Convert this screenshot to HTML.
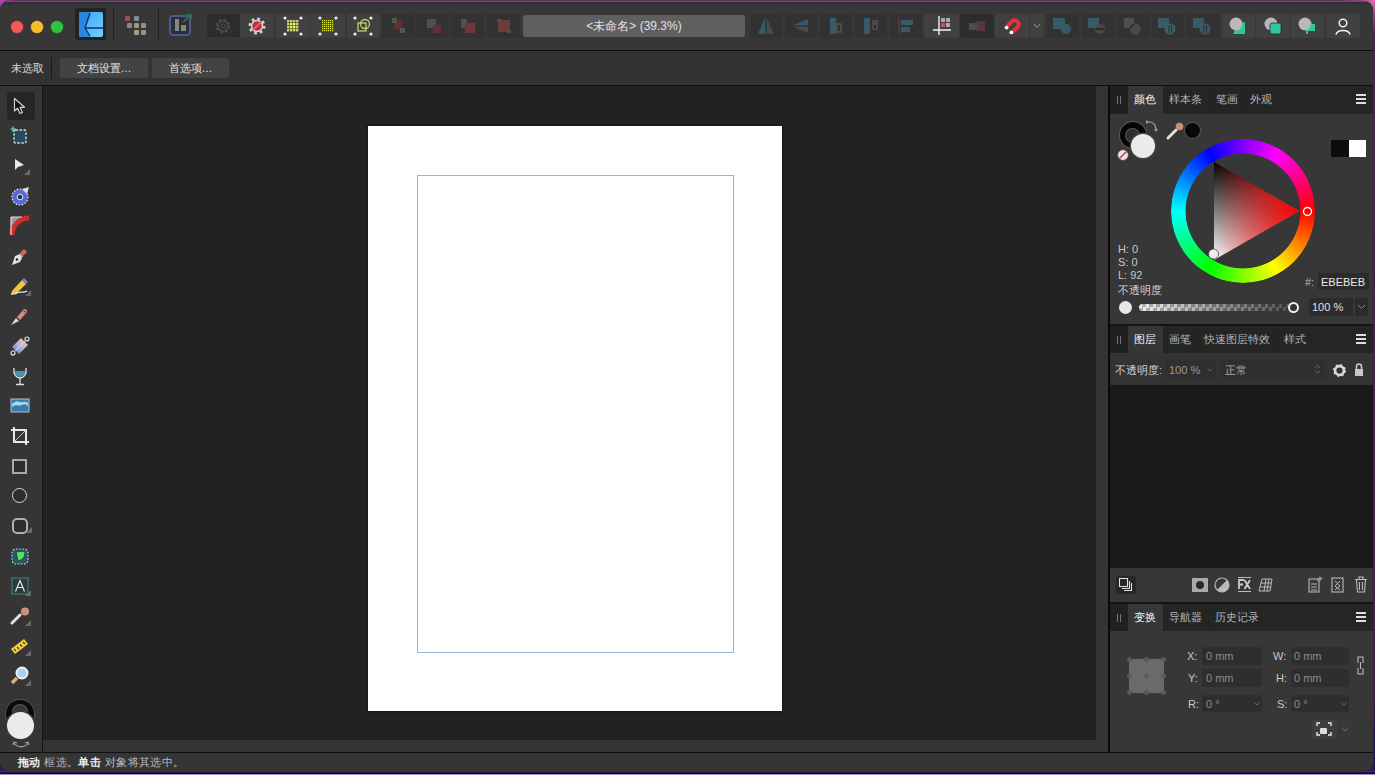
<!DOCTYPE html>
<html><head><meta charset="utf-8">
<style>
*{box-sizing:border-box;margin:0;padding:0}
html,body{width:1375px;height:775px;overflow:hidden;background:#4a2a6a;font-family:"Liberation Sans",sans-serif;color:#ddd}
.a{position:absolute}
#desk{left:0;top:0;width:1375px;height:775px;background:radial-gradient(circle at 0 0,#b048c0 0,#6a2a6a 14px,transparent 30px),radial-gradient(circle at 100% 0,#e070b0 0,#a04080 14px,transparent 34px),linear-gradient(180deg,#5a3a58 0,#4a2448 40px,#3e1e50 700px,#2a1860 100%)}
#deskb{left:0;top:771px;width:1375px;height:4px;background:linear-gradient(180deg,#3a3050 0,#3a3050 1px,#120424 2px,#120424 3px,#a890d0 3px)}
#win{left:0;top:0;width:1375px;height:775px;background:#353535;clip-path:inset(1px 2px 4px 0 round 9px)}
.btn{position:absolute;top:14px;height:24px;width:34px;background:#404040;border-radius:2px}
.dbtn{position:absolute;top:14px;height:24px;width:33px;background:#323232;border-radius:2px}
.tx{position:absolute;white-space:nowrap;line-height:1}
svg{position:absolute;overflow:visible}
</style></head><body>
<div id="desk" class="a"></div>
<div id="deskb" class="a"></div>
<div id="win" class="a">
  <!-- top toolbar -->
  <div class="a" style="left:0;top:0;width:1375px;height:50px;background:#373737"></div>
  <div class="a" style="left:0;top:1px;width:1375px;height:1px;background:#5e5a5c"></div>
  <div class="a" style="left:0;top:2px;width:1375px;height:2px;background:#303030"></div>
  <div class="a" style="left:0;top:50px;width:1375px;height:1px;background:#101010"></div>
  <!-- context bar -->
  <div class="a" style="left:0;top:51px;width:1375px;height:34px;background:#323232"></div>
  <div class="a" style="left:0;top:85px;width:1375px;height:1px;background:#0e0e0e"></div>
  <!-- left tools -->
  <div class="a" style="left:0;top:86px;width:42px;height:666px;background:#353535"></div>
  <div class="a" style="left:42px;top:86px;width:1px;height:666px;background:#141414"></div>
  <!-- canvas -->
  <div class="a" style="left:43px;top:86px;width:1053px;height:654px;background:#222"></div>
  <!-- scrollbars -->
  <div class="a" style="left:1096px;top:86px;width:12px;height:666px;background:#343434"></div>
  <div class="a" style="left:43px;top:740px;width:1053px;height:12px;background:#343434"></div>
  <div class="a" style="left:1108px;top:86px;width:2px;height:666px;background:#0a0a0a"></div>
  <!-- right panels -->
  <div class="a" style="left:1110px;top:86px;width:265px;height:666px;background:#373737"></div>
  <!-- status bar -->
  <div class="a" style="left:0;top:752px;width:1375px;height:1px;background:#0e0e0e"></div>
  <div class="a" style="left:0;top:753px;width:1375px;height:19px;background:#353535"></div>

  <!-- page -->
  <div class="a" style="left:367px;top:125px;width:416px;height:587px;background:#151515;filter:blur(1px)"></div>
  <div class="a" style="left:368px;top:126px;width:414px;height:585px;background:#fff"></div>
  <div class="a" style="left:417px;top:175px;width:317px;height:478px;border:1px solid #8fb8e0"></div>
  <!-- traffic lights -->
  <div class="a" style="left:11px;top:21px;width:12px;height:12px;border-radius:50%;background:#f25a55;box-shadow:0 0 0 0.5px #9a3a36"></div>
  <div class="a" style="left:31px;top:21px;width:12px;height:12px;border-radius:50%;background:#f6bd2c;box-shadow:0 0 0 0.5px #a07a20"></div>
  <div class="a" style="left:51px;top:21px;width:12px;height:12px;border-radius:50%;background:#2ec440;box-shadow:0 0 0 0.5px #1a8a2a"></div>
  <!-- logo -->
  <div class="a" style="left:75px;top:8px;width:31px;height:32px;background:#232323;border-radius:3px"></div>
  <svg style="left:79px;top:12px" width="24" height="25" viewBox="0 0 24 25">
    <defs><linearGradient id="lg1" x1="0" y1="0" x2="1" y2="1"><stop offset="0" stop-color="#3aa0f0"/><stop offset="1" stop-color="#70d4ff"/></linearGradient></defs>
    <rect x="0" y="0" width="24" height="25" rx="2" fill="url(#lg1)"/>
    <path d="M0 0 L11 0 L6 16 L11 25 L0 25Z" fill="#1f78d8" opacity="0.75"/>
    <path d="M11 1 L6 16 L11 24 M6 16 L24 16" stroke="#0b3470" stroke-width="1.4" fill="none"/>
  </svg>
  <div class="a" style="left:113px;top:8px;width:1px;height:32px;background:#242424"></div>
  <!-- grid icon -->
  <div class="a" style="left:125px;top:16px;width:5px;height:5px;border-radius:1px;background:#a84a55"></div>
  <div class="a" style="left:134px;top:16px;width:5px;height:5px;border-radius:1px;background:#7c8c9c"></div>
  <div class="a" style="left:127px;top:23px;width:5px;height:5px;border-radius:1px;background:#8a8a8a"></div>
  <div class="a" style="left:134px;top:23px;width:5px;height:5px;border-radius:1px;background:#b09070"></div>
  <div class="a" style="left:141px;top:23px;width:5px;height:5px;border-radius:1px;background:#8a9098"></div>
  <div class="a" style="left:134px;top:30px;width:5px;height:5px;border-radius:1px;background:#a09a90"></div>
  <div class="a" style="left:141px;top:30px;width:5px;height:5px;border-radius:1px;background:#a88a70"></div>
  <div class="a" style="left:158px;top:8px;width:1px;height:32px;background:#242424"></div>
  <!-- export persona -->
  <svg style="left:169px;top:14px" width="24" height="22" viewBox="0 0 24 22">
    <rect x="1" y="2" width="20" height="19" rx="3" fill="#2e2e2e" stroke="#4e5890" stroke-width="2"/>
    <rect x="6" y="5" width="4" height="12" fill="#858585"/>
    <rect x="12" y="11" width="5" height="6" fill="#858585"/>
    <path d="M14 8 L22 1 M17 1 L22 1 L22 5" stroke="#2f6a58" stroke-width="2" fill="none"/>
  </svg>
  <!-- gear buttons -->
  <div class="a" style="left:207px;top:14px;width:33px;height:23px;background:#2c2c2c"></div>
  <svg style="left:214px;top:17px" width="18" height="18" viewBox="0 0 18 18">
    <circle cx="9" cy="9" r="6" fill="none" stroke="#4a4a4a" stroke-width="3" stroke-dasharray="2.4 2.3"/>
    <circle cx="9" cy="9" r="5" fill="none" stroke="#4a4a4a" stroke-width="1.6"/>
    <circle cx="9" cy="9" r="2" fill="none" stroke="#4a4a4a" stroke-width="1.2"/>
  </svg>
  <div class="btn" style="left:240px;width:34px;top:14px;height:23px;"></div>
  <svg style="left:248px;top:17px" width="18" height="18" viewBox="0 0 18 18">
    <circle cx="9" cy="9" r="7" fill="none" stroke="#d8d0d0" stroke-width="3" stroke-dasharray="2.6 2.9"/>
    <circle cx="9" cy="9" r="5.5" fill="#b03040" stroke="#d8d0d0" stroke-width="1.5"/>
    <path d="M5 13 L13 5" stroke="#ff5060" stroke-width="2"/>
  </svg>
  <!-- snap/select buttons -->
  <div class="btn" style="left:276px;top:14px;height:24px;"></div>
  <svg style="left:283px;top:16px" width="20" height="20" viewBox="0 0 20 20">
    <g fill="#eee"><circle cx="2" cy="2" r="1.6"/><circle cx="18" cy="2" r="1.6"/><circle cx="2" cy="18" r="1.6"/><circle cx="18" cy="18" r="1.6"/></g>
    <g fill="#c8d070">
      <rect x="4" y="4" width="2.4" height="2.4"/><rect x="7" y="4" width="2.4" height="2.4"/><rect x="10" y="4" width="2.4" height="2.4"/><rect x="13" y="4" width="2.4" height="2.4"/>
      <rect x="4" y="7" width="2.4" height="2.4"/><rect x="13" y="7" width="2.4" height="2.4"/>
      <rect x="4" y="10" width="2.4" height="2.4"/><rect x="13" y="10" width="2.4" height="2.4"/>
      <rect x="4" y="13" width="2.4" height="2.4"/><rect x="7" y="13" width="2.4" height="2.4"/><rect x="10" y="13" width="2.4" height="2.4"/><rect x="13" y="13" width="2.4" height="2.4"/>
    </g>
    <g fill="#e8ff40"><rect x="7" y="7" width="2.4" height="2.4"/><rect x="10" y="7" width="2.4" height="2.4"/><rect x="7" y="10" width="2.4" height="2.4"/><rect x="10" y="10" width="2.4" height="2.4"/></g>
  </svg>
  <div class="btn" style="left:311px;top:14px;height:24px;"></div>
  <svg style="left:318px;top:16px" width="20" height="20" viewBox="0 0 20 20">
    <g fill="#eee"><circle cx="2" cy="2" r="1.6"/><circle cx="18" cy="2" r="1.6"/><circle cx="2" cy="18" r="1.6"/><circle cx="18" cy="18" r="1.6"/></g>
    <g fill="#d8e040">
      <rect x="4" y="4" width="12" height="12" fill="url(#dots)"/>
    </g>
    <defs><pattern id="dots" width="2" height="2" patternUnits="userSpaceOnUse"><rect width="1.2" height="1.2" fill="#e0e840"/></pattern></defs>
  </svg>
  <div class="btn" style="left:347px;top:14px;height:24px;width:33px"></div>
  <svg style="left:353px;top:16px" width="20" height="20" viewBox="0 0 20 20">
    <g fill="#eee"><circle cx="2" cy="2" r="1.6"/><circle cx="18" cy="2" r="1.6"/><circle cx="2" cy="18" r="1.6"/><circle cx="18" cy="18" r="1.6"/></g>
    <rect x="5" y="7" width="8" height="8" fill="none" stroke="#c8d070" stroke-width="1.3"/>
    <circle cx="12" cy="8" r="4.5" fill="none" stroke="#c8d070" stroke-width="1.3"/>
  </svg>
  <!-- dim arrange icons -->
  <div class="dbtn" style="left:382px;top:14px;height:24px"></div>
  <svg style="opacity:.7;left:390px;top:17px" width="18" height="18" viewBox="0 0 18 18">
    <rect x="2" y="1" width="5" height="5" fill="#5a6a5a"/><rect x="4" y="6" width="8" height="6" fill="#7a3038"/><rect x="8" y="3" width="5" height="5" fill="#6a3038"/><rect x="10" y="11" width="5" height="5" fill="#5a6a5a"/>
  </svg>
  <div class="dbtn" style="left:416px;top:14px;height:24px"></div>
  <svg style="opacity:.7;left:425px;top:17px" width="18" height="18" viewBox="0 0 18 18">
    <rect x="2" y="2" width="9" height="9" fill="#5e5e5e"/><rect x="8" y="8" width="8" height="8" fill="#7a3040"/>
  </svg>
  <div class="dbtn" style="left:451px;top:14px;height:24px"></div>
  <svg style="opacity:.7;left:459px;top:17px" width="18" height="18" viewBox="0 0 18 18">
    <rect x="2" y="2" width="6" height="9" fill="#5e5e5e"/><rect x="6" y="6" width="10" height="10" fill="#8a3a40"/>
  </svg>
  <div class="dbtn" style="left:487px;top:14px;height:24px"></div>
  <svg style="opacity:.7;left:495px;top:17px" width="18" height="18" viewBox="0 0 18 18">
    <rect x="3" y="3" width="12" height="12" fill="#8a4040"/><rect x="2" y="2" width="4" height="3" fill="#5a5a5a"/><rect x="12" y="13" width="4" height="3" fill="#5a5a5a"/>
  </svg>
  <!-- title -->
  <div class="a" style="left:523px;top:15px;width:222px;height:22px;background:#5f5f5f;border-radius:3px"></div>
  <div class="tx" style="left:523px;top:20px;width:222px;text-align:center;font-size:12px;color:#e2e2e2">&lt;未命名&gt; (39.3%)</div>
  <!-- right toolbar dim icons -->
  <div class="dbtn" style="left:750px;top:14px;height:24px;width:32px"></div>
  <svg style="opacity:.7;left:757px;top:17px" width="18" height="18" viewBox="0 0 18 18">
    <path d="M8 1 L8 17 L1 17Z" fill="#3a6a80"/><path d="M10 1 L10 17 L17 17Z" fill="#555"/><path d="M9 0 L9 18" stroke="#2a4a70" stroke-width="1"/>
  </svg>
  <div class="dbtn" style="left:785px;top:14px;height:24px;width:32px"></div>
  <svg style="opacity:.7;left:792px;top:17px" width="18" height="18" viewBox="0 0 18 18">
    <path d="M16 2 L16 8 L2 8Z" fill="#3a6a80"/><path d="M16 10 L16 16 L2 10Z" fill="#555"/><path d="M1 9 L17 9" stroke="#2a4a70" stroke-width="1"/>
  </svg>
  <div class="dbtn" style="left:820px;top:14px;height:24px;width:32px"></div>
  <svg style="opacity:.7;left:827px;top:17px" width="18" height="18" viewBox="0 0 18 18">
    <rect x="3" y="1" width="6" height="16" fill="#3a6a80"/><rect x="9" y="6" width="6" height="10" fill="#555"/><rect x="11" y="8" width="2" height="6" fill="#2e2e2e"/>
  </svg>
  <div class="dbtn" style="left:855px;top:14px;height:24px;width:32px"></div>
  <svg style="opacity:.7;left:862px;top:17px" width="18" height="18" viewBox="0 0 18 18">
    <rect x="2" y="1" width="6" height="16" fill="#3a6a80"/><rect x="10" y="3" width="6" height="10" fill="#555"/><rect x="12" y="8" width="2" height="3" fill="#222"/>
  </svg>
  <div class="dbtn" style="left:890px;top:14px;height:24px;width:32px"></div>
  <svg style="opacity:.7;left:897px;top:17px" width="18" height="18" viewBox="0 0 18 18">
    <path d="M2 1 L2 17" stroke="#6a5a30" stroke-width="1"/><rect x="4" y="3" width="12" height="5" fill="#3a6a80"/><rect x="4" y="10" width="9" height="5" fill="#3a6a80"/>
  </svg>
  <div class="btn" style="left:924px;top:14px;height:24px;width:35px"></div>
  <svg style="left:932px;top:16px" width="20" height="20" viewBox="0 0 20 20">
    <rect x="9" y="2" width="4" height="4" fill="#aaa"/><rect x="14" y="2" width="4" height="4" fill="#aaa"/>
    <rect x="9" y="7" width="4" height="4" fill="#d84a4a"/><rect x="14" y="7" width="4" height="4" fill="#aaa"/>
    <path d="M7 0 L7 19 M1 14 L19 14" stroke="#f0f0f0" stroke-width="1.4"/>
  </svg>
  <div class="dbtn" style="left:960px;top:14px;height:24px;width:34px;background:#2d2d2d"></div>
  <svg style="opacity:.7;left:968px;top:17px" width="18" height="18" viewBox="0 0 18 18">
    <rect x="1" y="6" width="8" height="7" fill="#5a5a5a"/><rect x="9" y="4" width="8" height="10" fill="#6a3a48"/>
  </svg>
  <div class="btn" style="left:995px;top:14px;height:24px;width:34px"></div>
  <svg style="left:1002px;top:16px" width="20" height="20" viewBox="0 0 20 20">
    <path d="M5.2 10.1 L10.2 5.2 A4 4 0 0 1 15.8 10.8 L10.9 15.8" fill="none" stroke="#e83040" stroke-width="4"/>
    <circle cx="4.6" cy="11.6" r="1.9" fill="#fff"/><circle cx="9.4" cy="16.4" r="1.9" fill="#fff"/>
  </svg>
  <div class="btn" style="left:1030px;top:14px;height:24px;width:14px"></div>
  <svg style="left:1033px;top:23px" width="8" height="6" viewBox="0 0 8 6"><path d="M1 1 L4 4.5 L7 1" stroke="#999" stroke-width="1" fill="none"/></svg>
  <!-- boolean dim -->
  <div class="dbtn" style="left:1047px;top:14px;height:24px;width:32px"></div>
  <svg style="opacity:.7;left:1053px;top:17px" width="18" height="18" viewBox="0 0 18 18">
    <rect x="0" y="1" width="12" height="11" fill="#3a6a80"/><circle cx="13" cy="12" r="5" fill="#3a6a80"/>
  </svg>
  <div class="dbtn" style="left:1082px;top:14px;height:24px;width:32px"></div>
  <svg style="opacity:.7;left:1088px;top:17px" width="18" height="18" viewBox="0 0 18 18">
    <rect x="0" y="1" width="11" height="10" fill="#3a6a80"/><circle cx="12" cy="12" r="5" fill="#5a5050"/><rect x="8" y="11" width="8" height="2" fill="#2a2a2a"/>
  </svg>
  <div class="dbtn" style="left:1117px;top:14px;height:24px;width:32px"></div>
  <svg style="opacity:.7;left:1123px;top:17px" width="18" height="18" viewBox="0 0 18 18">
    <rect x="1" y="1" width="10" height="10" fill="#5a5a5a"/><circle cx="12" cy="12" r="5.5" fill="#555"/><path d="M7 11 L11 7" stroke="#222" stroke-width="1.5"/>
  </svg>
  <div class="dbtn" style="left:1152px;top:14px;height:24px;width:32px"></div>
  <svg style="opacity:.7;left:1158px;top:17px" width="18" height="18" viewBox="0 0 18 18">
    <rect x="0" y="1" width="11" height="10" fill="#3a6a80"/><circle cx="12" cy="12" r="5.5" fill="#3a7a70"/><path d="M11 8 L11 16 M13.5 8 L13.5 16" stroke="#2a2a2a" stroke-width="1"/>
  </svg>
  <div class="dbtn" style="left:1187px;top:14px;height:24px;width:32px"></div>
  <svg style="opacity:.7;left:1193px;top:17px" width="18" height="18" viewBox="0 0 18 18">
    <rect x="0" y="1" width="11" height="10" fill="#3a6a80"/><circle cx="12" cy="12" r="5.5" fill="#3a6a80"/><path d="M11 8 L11 16 M13.5 8 L13.5 16" stroke="#2a2a2a" stroke-width="1"/>
  </svg>
  <!-- bright boolean -->
  <div class="btn" style="left:1222px;top:14px;height:24px;width:33px"></div>
  <svg style="left:1228px;top:16px" width="20" height="20" viewBox="0 0 20 20">
    <path d="M10 8 L17 6 L17 18 L5 18 L7 14Z" fill="#2ec8a0"/>
    <circle cx="8" cy="8" r="6.5" fill="#b8b8b8"/>
  </svg>
  <div class="btn" style="left:1256px;top:14px;height:24px;width:34px"></div>
  <svg style="left:1263px;top:16px" width="20" height="20" viewBox="0 0 20 20">
    <circle cx="8" cy="8" r="6.5" fill="#b8b8b8"/><rect x="7" y="7" width="11" height="11" rx="2" fill="#2ec8a0" stroke="#2a2a2a" stroke-width="0.8"/>
  </svg>
  <div class="btn" style="left:1291px;top:14px;height:24px;width:33px"></div>
  <svg style="left:1297px;top:16px" width="20" height="20" viewBox="0 0 20 20">
    <circle cx="8" cy="8" r="6.5" fill="#b8b8b8"/><path d="M14 8 L18 8 L18 15 L11 15 L11 18 L9 18 L9 14 A6.5 6.5 0 0 0 14 8Z" fill="#2ec8a0"/>
  </svg>
  <div class="btn" style="left:1326px;top:14px;height:24px;width:34px"></div>
  <svg style="left:1334px;top:16px" width="18" height="20" viewBox="0 0 18 20">
    <circle cx="9" cy="7" r="3.8" fill="none" stroke="#f0f0f0" stroke-width="1.5"/>
    <path d="M2 18.5 C3 13 15 13 16 18.5" fill="none" stroke="#f0f0f0" stroke-width="1.5"/>
  </svg>

  <div class="tx" style="left:11px;top:63px;font-size:11px;color:#d8d8d8">未选取</div>
  <div class="a" style="left:51px;top:57px;width:1px;height:22px;background:#181818"></div>
  <div class="a" style="left:60px;top:58px;width:88px;height:20px;background:#434343;border-radius:2px"></div>
  <div class="tx" style="left:60px;top:62px;width:88px;text-align:center;font-size:11px;color:#e0e0e0;top:63px">文档设置…</div>
  <div class="a" style="left:152px;top:58px;width:77px;height:20px;background:#434343;border-radius:2px"></div>
  <div class="tx" style="left:152px;top:62px;width:77px;text-align:center;font-size:11px;color:#e0e0e0;top:63px">首选项…</div>

  <!-- selected tool bg -->
  <div class="a" style="left:7px;top:92px;width:28px;height:28px;background:#262626;border-radius:2px"></div>
  <!-- 1 move -->
  <svg style="left:13px;top:97px" width="14" height="18" viewBox="0 0 14 18">
    <path d="M1.5 1.5 L1.5 14 L4.6 11.2 L7 16.5 L9.4 15.4 L7.1 10.3 L11.5 10.3Z" fill="#111" stroke="#cfcfcf" stroke-width="1.2" stroke-linejoin="round"/>
  </svg>
  <!-- 2 artboard -->
  <svg style="left:10px;top:126px" width="20" height="20" viewBox="0 0 20 20">
    <rect x="4" y="4" width="12" height="13" rx="1.5" fill="#2a4a60" stroke="#b8e8d8" stroke-width="1.4" stroke-dasharray="2.5 1.5"/>
    <path d="M3 0.5 L3 6 M0.5 3 L6 3" stroke="#7ad8c0" stroke-width="1.2"/>
  </svg>
  <!-- 3 node -->
  <svg style="left:12px;top:157px" width="20" height="20" viewBox="0 0 20 20">
    <path d="M3 2 L3 13 L6 10 L12 8Z" fill="#e8e8e8"/>
    <path d="M18 12 L18 18 L12 18Z" fill="#6a6a6a"/>
  </svg>
  <!-- 4 corner -->
  <svg style="left:10px;top:186px" width="20" height="20" viewBox="0 0 20 20">
    <circle cx="10" cy="11" r="8" fill="#5a6ad0" stroke="#e0e8ff" stroke-width="1.2" stroke-dasharray="1.5 1.6"/>
    <circle cx="10" cy="11" r="2.8" fill="#203050" stroke="#e0e8ff" stroke-width="1"/>
    <path d="M12 3 L19 1 L17 8Z" fill="#e0e0e0"/>
  </svg>
  <!-- 5 point transform / corner red -->
  <svg style="left:10px;top:216px" width="20" height="20" viewBox="0 0 20 20">
    <path d="M1 1 L11 1 L1 11Z" fill="#9a9a9a"/>
    <path d="M1 1 L1 19 L6 19 A13 13 0 0 1 19 6 L19 1Z" fill="#c03030" opacity="0.0"/>
    <path d="M2 19 A17 17 0 0 1 19 2" fill="none" stroke="#c83030" stroke-width="5"/>
    <path d="M1 1 L1 19" stroke="#ddd" stroke-width="1.2"/><path d="M1 1 L12 1" stroke="#ddd" stroke-width="1.2"/>
  </svg>
  <!-- 6 pen -->
  <svg style="left:10px;top:246px" width="20" height="20" viewBox="0 0 20 20">
    <path d="M2 19 L5 10 L10 8 L12 12 L10 16Z" fill="#e0e0e0"/>
    <circle cx="7" cy="13.5" r="1.2" fill="#222"/>
    <path d="M10 7 L14 3 L17 6 L13 10Z" fill="#e06060"/>
    <path d="M9.5 8 L12.5 11" stroke="#b0d0e0" stroke-width="1.5"/>
  </svg>
  <!-- 7 pencil -->
  <svg style="left:10px;top:276px" width="22" height="20" viewBox="0 0 22 20">
    <path d="M2 15 L12 4 L16 8 L6 18Z" fill="#f0c840"/>
    <path d="M2 15 L6 18 L1 19Z" fill="#f0e0b0"/>
    <path d="M12 4 L14 2 L18 6 L16 8Z" fill="#9a70d0"/>
    <path d="M5 18 C9 14 13 18 17 15" fill="none" stroke="#e8e8e8" stroke-width="1.3"/>
    <path d="M21 14 L21 20 L15 20Z" fill="#6a6a6a"/>
  </svg>
  <!-- 8 brush -->
  <svg style="left:10px;top:306px" width="20" height="20" viewBox="0 0 20 20">
    <path d="M1 19 L6 12 L9 15Z" fill="#d8d8d8"/>
    <path d="M7 11 L14 3 A2.5 2.5 0 0 1 17 6 L10 14Z" fill="#d09080"/>
    <circle cx="14.5" cy="5.5" r="1" fill="#703030"/>
  </svg>
  <!-- 9 fill -->
  <svg style="left:10px;top:336px" width="20" height="20" viewBox="0 0 20 20">
    <defs><linearGradient id="fg" x1="0" y1="1" x2="1" y2="0"><stop offset="0" stop-color="#3a80c0"/><stop offset="0.5" stop-color="#c0b0e0"/><stop offset="1" stop-color="#f0d090"/></linearGradient></defs>
    <path d="M2 11 L11 2 L18 9 L9 18Z" fill="url(#fg)"/>
    <path d="M3 17 L17 3" stroke="#dde" stroke-width="1"/>
    <circle cx="3" cy="17" r="2" fill="#333" stroke="#eee" stroke-width="1.1"/>
    <circle cx="17" cy="3" r="2" fill="#333" stroke="#eee" stroke-width="1.1"/>
  </svg>
  <!-- 10 transparency glass -->
  <svg style="left:12px;top:366px" width="16" height="20" viewBox="0 0 16 20">
    <path d="M2 2 C1 9 5 12 8 12 C11 12 15 9 14 2" fill="none" stroke="#ddd" stroke-width="1.3"/>
    <path d="M3 5 C3 10 6 11 8 11 C10 11 13 10 13 5Z" fill="#4a90b0"/>
    <path d="M8 12 L8 18 M4 18.5 L12 18.5" stroke="#ddd" stroke-width="1.3"/>
  </svg>
  <!-- 11 place image -->
  <svg style="left:10px;top:398px" width="20" height="16" viewBox="0 0 20 16">
    <rect x="1" y="1" width="18" height="13" fill="#3a7aa8" stroke="#b0c0d0" stroke-width="1"/>
    <path d="M2 9 C6 5 9 9 12 7 C15 5 17 7 18 8 L18 5 C15 2 12 5 10 4 C7 2 4 4 2 6Z" fill="#a8d8f0"/>
  </svg>
  <!-- 12 crop -->
  <svg style="left:10px;top:426px" width="20" height="20" viewBox="0 0 20 20">
    <path d="M4 1 L4 16 L19 16 M1 4 L16 4 L16 19" fill="none" stroke="#e8e8e8" stroke-width="2"/>
    <path d="M4 16 L16 4" stroke="#c0c0c0" stroke-width="1"/>
  </svg>
  <!-- 13 rect -->
  <div class="a" style="left:12px;top:459px;width:15px;height:15px;border:2px solid #a8a8a8;background:#2a2f2e"></div>
  <!-- 14 ellipse -->
  <div class="a" style="left:12px;top:488px;width:15px;height:15px;border:1.4px solid #d8d8d8;border-radius:50%;background:#2a2f2e"></div>
  <!-- 15 rounded rect -->
  <div class="a" style="left:12px;top:518px;width:16px;height:16px;border:2px solid #b0b0b0;border-radius:5px;background:#2a2f2e"></div>
  <svg style="left:26px;top:527px" width="6" height="6" viewBox="0 0 6 6"><path d="M6 0 L6 6 L0 6Z" fill="#6a6a6a"/></svg>
  <!-- 16 shape builder -->
  <svg style="left:10px;top:546px" width="20" height="20" viewBox="0 0 20 20">
    <rect x="2" y="3" width="16" height="15" rx="4" fill="#2a5a60" stroke="#c0d0f0" stroke-width="1.2" stroke-dasharray="1.6 1.6"/>
    <path d="M6 6 L15 5 C15 11 13 14 8 15 Z" fill="#50e070" stroke="#1a3a30" stroke-width="0.8"/>
  </svg>
  <!-- 17 text -->
  <svg style="left:10px;top:576px" width="22" height="20" viewBox="0 0 22 20">
    <rect x="2" y="2" width="16" height="16" fill="#2f3a3a" stroke="#3a8a8a" stroke-width="1"/>
    <path d="M5.5 15.5 L10 4.5 L14.5 15.5 M7.2 11.5 L12.8 11.5" fill="none" stroke="#e8e8e8" stroke-width="1.2"/>
    <path d="M21 14 L21 20 L15 20Z" fill="#6a6a6a"/>
  </svg>
  <!-- 18 picker -->
  <svg style="left:10px;top:606px" width="22" height="20" viewBox="0 0 22 20">
    <path d="M2 17 L10 9" stroke="#e0e0e0" stroke-width="3" stroke-linecap="round"/>
    <circle cx="15" cy="5.5" r="4" fill="#d09080"/>
    <path d="M21 14 L21 20 L15 20Z" fill="#6a6a6a"/>
  </svg>
  <!-- 19 measure -->
  <svg style="left:10px;top:636px" width="22" height="20" viewBox="0 0 22 20">
    <path d="M1 13 L14 3 L18 8 L5 18Z" fill="#f0d040"/>
    <path d="M4 13 L6 15 M7 11 L9 13 M10 8.5 L12 10.5 M13 6 L15 8" stroke="#503810" stroke-width="1.2"/>
    <path d="M21 14 L21 20 L15 20Z" fill="#6a6a6a"/>
  </svg>
  <!-- 20 zoom -->
  <svg style="left:10px;top:666px" width="22" height="20" viewBox="0 0 22 20">
    <path d="M2 17 L7 12" stroke="#d8b080" stroke-width="3.5"/>
    <circle cx="12" cy="7" r="5.5" fill="#a8d0f0" stroke="#f0f0f0" stroke-width="2"/>
    <path d="M21 14 L21 20 L15 20Z" fill="#6a6a6a"/>
  </svg>
  <!-- color swatches -->
  <div class="a" style="left:6px;top:700px;width:28px;height:28px;border-radius:50%;background:#0a0a0a;box-shadow:0 0 0 1px #505050"></div>
  <div class="a" style="left:13px;top:705px;width:14px;height:14px;border-radius:50%;background:#383838;box-shadow:0 0 0 1px #555"></div>
  <div class="a" style="left:7px;top:712px;width:27px;height:27px;border-radius:50%;background:#ebebeb;box-shadow:0 0 0 1.5px #3a3a3a"></div>
  <svg style="left:12px;top:741px" width="18" height="8" viewBox="0 0 18 8"><path d="M2 2 C5 7 13 7 16 2 M1 4 L2 1 L5 2 M17 4 L16 1 L13 2" fill="none" stroke="#999" stroke-width="1.3"/></svg>

  <!-- ===== color panel ===== -->
  <div class="a" style="left:1110px;top:86px;width:265px;height:28px;background:#252525"></div>
  <div class="a" style="left:1110px;top:86px;width:18px;height:28px;background:#202020"></div>
  <div class="a" style="left:1117px;top:96px;width:1px;height:8px;background:#777"></div>
  <div class="a" style="left:1120px;top:96px;width:1px;height:8px;background:#777"></div>
  <div class="a" style="left:1128px;top:86px;width:35px;height:28px;background:#373737"></div>
  <div class="a" style="left:1208px;top:88px;width:1px;height:23px;background:#222"></div>
  <div class="a" style="left:1244px;top:88px;width:1px;height:23px;background:#222"></div>
  <div class="tx" style="left:1134px;top:94px;font-size:11px;color:#f2f2f2">颜色</div>
  <div class="tx" style="left:1169px;top:94px;font-size:11px;color:#b4b4b4">样本条</div>
  <div class="tx" style="left:1216px;top:94px;font-size:11px;color:#b4b4b4">笔画</div>
  <div class="tx" style="left:1250px;top:94px;font-size:11px;color:#b4b4b4">外观</div>
  <div class="a" style="left:1356px;top:94px;width:10px;height:2px;background:#e0e0e0;box-shadow:0 4px 0 #e0e0e0,0 8px 0 #e0e0e0"></div>

  <!-- fill/stroke circles -->
  <div class="a" style="left:1119.5px;top:122px;width:26px;height:26px;border-radius:50%;background:#050505;box-shadow:0 0 0 1px #5a5a5a"></div>
  <div class="a" style="left:1126px;top:129px;width:13px;height:13px;border-radius:50%;background:#2e2e2e;box-shadow:0 0 0 1px #555"></div>
  <div class="a" style="left:1131px;top:134px;width:24px;height:24px;border-radius:50%;background:#ebebeb;box-shadow:0 0 0 1.5px #444"></div>
  <svg style="left:1117px;top:149px" width="12" height="12" viewBox="0 0 12 12">
    <circle cx="6" cy="6" r="5.3" fill="#f0e0e0" stroke="#555" stroke-width="0.6"/>
    <path d="M2.5 9.5 L9.5 2.5" stroke="#b04050" stroke-width="1.5"/>
  </svg>
  <svg style="left:1145px;top:119px" width="14" height="14" viewBox="0 0 14 14">
    <path d="M2 3 C7 2 11 5 11 11" fill="none" stroke="#9a9a9a" stroke-width="1.2"/>
    <path d="M1 1 L4 3 L1 5Z M9 10 L11 13 L13 10Z" fill="#9a9a9a"/>
  </svg>
  <svg style="left:1166px;top:121px" width="20" height="19" viewBox="0 0 20 19">
    <path d="M2 17 L10 9" stroke="#e0e0e0" stroke-width="3" stroke-linecap="round"/>
    <circle cx="13.5" cy="5.5" r="3.8" fill="#c89078"/>
  </svg>
  <div class="a" style="left:1185px;top:123px;width:15px;height:15px;border-radius:50%;background:#080808;box-shadow:0 0 0 1px #555"></div>
  <div class="a" style="left:1331px;top:140px;width:18px;height:17px;background:#0c0c0c"></div>
  <div class="a" style="left:1349px;top:140px;width:17px;height:17px;background:#fff"></div>

  <!-- wheel -->
  <div class="a" style="left:1171px;top:139px;width:144px;height:144px;border-radius:50%;background:conic-gradient(from 90deg,#f00,#ff0 60deg,#0f0 120deg,#0ff 180deg,#00f 240deg,#f0f 300deg,#f00 360deg);-webkit-mask:radial-gradient(circle,transparent 57px,#000 57.8px);mask:radial-gradient(circle,transparent 57px,#000 57.8px)"></div>
  <svg style="left:1171px;top:139px" width="144" height="144" viewBox="0 0 144 144">
    <defs>
      <linearGradient id="tv" x1="0" y1="0" x2="0" y2="1"><stop offset="0" stop-color="#000"/><stop offset="1" stop-color="#fff"/></linearGradient>
      <linearGradient id="th" x1="0" y1="0" x2="1" y2="0"><stop offset="0" stop-color="#f00" stop-opacity="0"/><stop offset="1" stop-color="#f00" stop-opacity="1"/></linearGradient>
    </defs>
    <path d="M43 23 L128 72 L43 121Z" fill="url(#tv)"/>
    <path d="M43 23 L128 72 L43 121Z" fill="url(#th)"/>
    <circle cx="136.5" cy="72.5" r="4" fill="none" stroke="#fff" stroke-width="1.4"/>
    <circle cx="42.5" cy="115" r="5" fill="#ececec" stroke="#444" stroke-width="0.8"/>
  </svg>
  <div class="tx" style="left:1118px;top:244px;font-size:11px;color:#c8c8c8">H: 0</div>
  <div class="tx" style="left:1118px;top:257px;font-size:11px;color:#c8c8c8">S: 0</div>
  <div class="tx" style="left:1118px;top:270px;font-size:11px;color:#c8c8c8">L: 92</div>
  <div class="tx" style="left:1118px;top:285px;font-size:11px;color:#d0d0d0">不透明度</div>
  <div class="tx" style="left:1305px;top:277px;font-size:11px;color:#b8b8b8">#:</div>
  <div class="a" style="left:1318px;top:273px;width:51px;height:17px;background:#2b2b2b;border-radius:2px"></div>
  <div class="tx" style="left:1321px;top:277px;font-size:11px;color:#e8e8e8">EBEBEB</div>
  <!-- opacity slider -->
  <div class="a" style="left:1119px;top:301px;width:13px;height:13px;border-radius:50%;background:#e8e8e8"></div>
  <div class="a" style="left:1139px;top:304px;width:156px;height:7px;border-radius:4px;background:linear-gradient(90deg,#f0f0f0,#7a7a7a 60%,#3a3a3a),repeating-conic-gradient(#999 0 25%,#ddd 0 50%) 0 0/6px 6px"></div>
  <div class="a" style="left:1139px;top:304px;width:156px;height:7px;border-radius:4px;background:repeating-conic-gradient(rgba(0,0,0,0.25) 0 25%,rgba(255,255,255,0.1) 0 50%) 0 0/7px 7px"></div>
  <div class="a" style="left:1288px;top:302px;width:11px;height:11px;border-radius:50%;border:2px solid #f0f0f0;background:#333"></div>
  <div class="a" style="left:1309px;top:298px;width:44px;height:18px;background:#2b2b2b;border-radius:2px"></div>
  <div class="tx" style="left:1312px;top:302px;font-size:11px;color:#e0e0e0">100 %</div>
  <div class="a" style="left:1355px;top:298px;width:13px;height:18px;background:#2b2b2b;border-radius:2px"></div>
  <svg style="left:1357px;top:304px" width="9" height="6" viewBox="0 0 9 6"><path d="M1 1 L4.5 4.5 L8 1" stroke="#888" stroke-width="1" fill="none"/></svg>

  <div class="a" style="left:1110px;top:324px;width:265px;height:2px;background:#141414"></div>

  <!-- ===== layers panel ===== -->
  <div class="a" style="left:1110px;top:326px;width:265px;height:27px;background:#252525"></div>
  <div class="a" style="left:1110px;top:326px;width:18px;height:27px;background:#202020"></div>
  <div class="a" style="left:1117px;top:336px;width:1px;height:8px;background:#777"></div>
  <div class="a" style="left:1120px;top:336px;width:1px;height:8px;background:#777"></div>
  <div class="a" style="left:1128px;top:326px;width:35px;height:27px;background:#373737"></div>
  <div class="a" style="left:1196px;top:328px;width:1px;height:23px;background:#222"></div>
  <div class="a" style="left:1277px;top:328px;width:1px;height:23px;background:#222"></div>
  <div class="tx" style="left:1134px;top:334px;font-size:11px;color:#f2f2f2">图层</div>
  <div class="tx" style="left:1169px;top:334px;font-size:11px;color:#b4b4b4">画笔</div>
  <div class="tx" style="left:1204px;top:334px;font-size:11px;color:#b4b4b4">快速图层特效</div>
  <div class="tx" style="left:1284px;top:334px;font-size:11px;color:#b4b4b4">样式</div>
  <div class="a" style="left:1356px;top:334px;width:10px;height:2px;background:#e0e0e0;box-shadow:0 4px 0 #e0e0e0,0 8px 0 #e0e0e0"></div>
  <!-- opacity row -->
  <div class="a" style="left:1110px;top:353px;width:265px;height:32px;background:#333"></div>
  <div class="tx" style="left:1115px;top:365px;font-size:11px;color:#cfcfcf">不透明度:</div>
  <div class="a" style="left:1166px;top:361px;width:50px;height:17px;background:#2f2f2f;border-radius:2px"></div>
  <div class="tx" style="left:1169px;top:365px;font-size:11px;color:#9a9a9a">100 %</div>
  <svg style="left:1207px;top:368px" width="6" height="4" viewBox="0 0 6 4"><path d="M0.5 0.5 L3 3 L5.5 0.5" stroke="#666" stroke-width="1" fill="none"/></svg>
  <div class="a" style="left:1220px;top:360px;width:105px;height:19px;background:#2f2f2f;border-radius:2px"></div>
  <div class="tx" style="left:1225px;top:365px;font-size:11px;color:#a8a8a8">正常</div>
  <svg style="left:1314px;top:364px" width="7" height="11" viewBox="0 0 7 11"><path d="M1 4 L3.5 1.5 L6 4 M1 7 L3.5 9.5 L6 7" stroke="#666" stroke-width="1" fill="none"/></svg>
  <svg style="left:1333px;top:364px" width="13" height="13" viewBox="0 0 13 13">
    <circle cx="6.5" cy="6.5" r="4.4" fill="none" stroke="#d8d8d8" stroke-width="2.6"/>
    <circle cx="6.5" cy="6.5" r="5.6" fill="none" stroke="#d8d8d8" stroke-width="1.8" stroke-dasharray="2 2.4"/>
  </svg>
  <svg style="left:1354px;top:362px" width="10" height="15" viewBox="0 0 10 15">
    <path d="M2.5 7 L2.5 4.5 A2.5 2.5 0 0 1 7.5 4.5 L7.5 7" fill="none" stroke="#ccc" stroke-width="1.5"/>
    <rect x="1" y="7" width="8" height="7" fill="#c8c8c8"/>
  </svg>
  <!-- layers list -->
  <div class="a" style="left:1110px;top:385px;width:265px;height:183px;background:#1a1a1a"></div>
  <!-- layers bottom toolbar -->
  <div class="a" style="left:1116px;top:576px;width:20px;height:18px;background:#262626;border-radius:2px"></div>
  <svg style="left:1118px;top:577px" width="15" height="15" viewBox="0 0 15 15">
    <rect x="1.5" y="1.5" width="8" height="8" fill="none" stroke="#ddd" stroke-width="1.1"/>
    <path d="M11.5 4 L11.5 11.5 L4 11.5 M13.5 6 L13.5 13.5 L6 13.5" fill="none" stroke="#ddd" stroke-width="1.1"/>
  </svg>
  <div class="a" style="left:1192px;top:578px;width:16px;height:14px;background:#aaa"></div>
  <div class="a" style="left:1196px;top:581px;width:8px;height:8px;border-radius:50%;background:#2a2a2a"></div>
  <svg style="left:1214px;top:577px" width="16" height="16" viewBox="0 0 16 16">
    <circle cx="8" cy="8" r="7" fill="none" stroke="#bbb" stroke-width="1.2"/>
    <path d="M3 13 L13 3 A7 7 0 0 1 3 13Z" fill="#bbb"/>
  </svg>
  <svg style="left:1237px;top:576px" width="15" height="17" viewBox="0 0 15 17">
    <path d="M1 1.5 L14 1.5 M1 15.5 L14 15.5" stroke="#bbb" stroke-width="1"/>
    <path d="M2 13 L2 4 L7 4 M2 8.5 L6 8.5 M7.5 4 L13 13 M13 4 L7.5 13" fill="none" stroke="#c8c8c8" stroke-width="1.8"/>
  </svg>
  <svg style="left:1258px;top:577px" width="16" height="16" viewBox="0 0 16 16">
    <path d="M4 2 L14 2 L12 14 L1 14Z M8 2 L6 14 M11 2 L9 14 M2.5 6 L13 6 M2 10 L12.5 10" fill="none" stroke="#bbb" stroke-width="1"/>
  </svg>
  <svg style="left:1307px;top:576px" width="16" height="17" viewBox="0 0 16 17">
    <path d="M2 3 L10 3 L12 5 L12 16 L2 16Z" fill="none" stroke="#bbb" stroke-width="1.1"/>
    <path d="M4 8 L10 8 M4 11 L10 11 M4 14 L10 14" stroke="#bbb" stroke-width="1"/>
    <path d="M13 0.5 L13 5 M10.8 2.7 L15.3 2.7" stroke="#bbb" stroke-width="1"/>
  </svg>
  <svg style="left:1331px;top:577px" width="13" height="16" viewBox="0 0 13 16">
    <rect x="1" y="1" width="11" height="14" fill="none" stroke="#bbb" stroke-width="1.1"/>
    <path d="M4 4 L9 9 M9 4 L4 9 M4 9 L9 13 M9 9 L4 13" stroke="#bbb" stroke-width="1"/>
  </svg>
  <svg style="left:1354px;top:576px" width="14" height="17" viewBox="0 0 14 17">
    <path d="M1 3.5 L13 3.5 M5 3 L5 1 L9 1 L9 3" fill="none" stroke="#bbb" stroke-width="1.2"/>
    <path d="M2.5 4 L3.5 16 L10.5 16 L11.5 4 M5.5 6 L5.5 14 M8.5 6 L8.5 14" fill="none" stroke="#bbb" stroke-width="1.1"/>
  </svg>
  <div class="a" style="left:1110px;top:602px;width:265px;height:2px;background:#141414"></div>

  <!-- ===== transform panel ===== -->
  <div class="a" style="left:1110px;top:604px;width:265px;height:27px;background:#252525"></div>
  <div class="a" style="left:1110px;top:604px;width:18px;height:27px;background:#202020"></div>
  <div class="a" style="left:1117px;top:614px;width:1px;height:8px;background:#777"></div>
  <div class="a" style="left:1120px;top:614px;width:1px;height:8px;background:#777"></div>
  <div class="a" style="left:1128px;top:604px;width:35px;height:27px;background:#373737"></div>
  <div class="a" style="left:1208px;top:606px;width:1px;height:23px;background:#222"></div>
  <div class="tx" style="left:1134px;top:612px;font-size:11px;color:#f2f2f2">变换</div>
  <div class="tx" style="left:1169px;top:612px;font-size:11px;color:#b4b4b4">导航器</div>
  <div class="tx" style="left:1215px;top:612px;font-size:11px;color:#b4b4b4">历史记录</div>
  <div class="a" style="left:1356px;top:612px;width:10px;height:2px;background:#e0e0e0;box-shadow:0 4px 0 #e0e0e0,0 8px 0 #e0e0e0"></div>
  <!-- anchor -->
  <div class="a" style="left:1129px;top:659px;width:35px;height:34px;background:#6a6a6a"></div>
  <svg style="left:1126px;top:656px" width="41" height="40" viewBox="0 0 41 40">
    <g fill="#5a5a5a"><circle cx="3.5" cy="3.5" r="2.5"/><circle cx="20.5" cy="3.5" r="2.5"/><circle cx="37.5" cy="3.5" r="2.5"/>
    <circle cx="3.5" cy="20" r="2.5"/><circle cx="20.5" cy="20" r="2.5"/><circle cx="37.5" cy="20" r="2.5"/>
    <circle cx="3.5" cy="36.5" r="2.5"/><circle cx="20.5" cy="36.5" r="2.5"/><circle cx="37.5" cy="36.5" r="2.5"/></g>
  </svg>
  <!-- fields -->
  <div class="tx" style="left:1187px;top:651px;font-size:11px;color:#c8c8c8">X:</div>
  <div class="a" style="left:1202px;top:647px;width:60px;height:18px;background:#2e2e2e;border-radius:2px"></div>
  <div class="tx" style="left:1206px;top:651px;font-size:11px;color:#8c8c8c">0 mm</div>
  <div class="tx" style="left:1188px;top:673px;font-size:11px;color:#c8c8c8">Y:</div>
  <div class="a" style="left:1202px;top:669px;width:60px;height:18px;background:#2e2e2e;border-radius:2px"></div>
  <div class="tx" style="left:1206px;top:673px;font-size:11px;color:#8c8c8c">0 mm</div>
  <div class="tx" style="left:1188px;top:699px;font-size:11px;color:#c8c8c8">R:</div>
  <div class="a" style="left:1202px;top:695px;width:60px;height:17px;background:#2e2e2e;border-radius:2px"></div>
  <div class="tx" style="left:1206px;top:699px;font-size:11px;color:#8c8c8c">0 °</div>
  <svg style="left:1254px;top:702px" width="6" height="4" viewBox="0 0 6 4"><path d="M0.5 0.5 L3 3 L5.5 0.5" stroke="#666" stroke-width="1" fill="none"/></svg>
  <div class="tx" style="left:1273px;top:651px;font-size:11px;color:#c8c8c8">W:</div>
  <div class="a" style="left:1291px;top:647px;width:58px;height:18px;background:#2e2e2e;border-radius:2px"></div>
  <div class="tx" style="left:1294px;top:651px;font-size:11px;color:#8c8c8c">0 mm</div>
  <div class="tx" style="left:1276px;top:673px;font-size:11px;color:#c8c8c8">H:</div>
  <div class="a" style="left:1291px;top:669px;width:58px;height:18px;background:#2e2e2e;border-radius:2px"></div>
  <div class="tx" style="left:1294px;top:673px;font-size:11px;color:#8c8c8c">0 mm</div>
  <div class="tx" style="left:1277px;top:699px;font-size:11px;color:#c8c8c8">S:</div>
  <div class="a" style="left:1291px;top:695px;width:58px;height:17px;background:#2e2e2e;border-radius:2px"></div>
  <div class="tx" style="left:1294px;top:699px;font-size:11px;color:#8c8c8c">0 °</div>
  <svg style="left:1341px;top:702px" width="6" height="4" viewBox="0 0 6 4"><path d="M0.5 0.5 L3 3 L5.5 0.5" stroke="#666" stroke-width="1" fill="none"/></svg>
  <svg style="left:1356px;top:655px" width="9" height="21" viewBox="0 0 9 21">
    <path d="M2 8 L2 2 L7 2 L7 8 M2 13 L2 19 L7 19 L7 13 M4.5 7 L4.5 14" fill="none" stroke="#bbb" stroke-width="1.1"/>
  </svg>
  <div class="a" style="left:1312px;top:720px;width:25px;height:19px;background:#3e3e3e;border-radius:2px"></div>
  <svg style="left:1316px;top:722px" width="16" height="14" viewBox="0 0 16 14">
    <path d="M1 4 L1 1 L4 1 M12 1 L15 1 L15 4 M15 10 L15 13 L12 13 M4 13 L1 13 L1 10" fill="none" stroke="#eee" stroke-width="1.3"/>
    <rect x="4" y="6" width="7" height="6" rx="1" fill="#ddd"/>
  </svg>
  <div class="a" style="left:1339px;top:720px;width:12px;height:19px;background:#383838;border-radius:2px"></div>
  <svg style="left:1342px;top:728px" width="6" height="4" viewBox="0 0 6 4"><path d="M0.5 0.5 L3 3 L5.5 0.5" stroke="#777" stroke-width="1" fill="none"/></svg>

  <div class="tx" style="left:18px;top:757px;font-size:11px;letter-spacing:0.4px;color:#bcbcbc"><b style="color:#f0f0f0">拖动</b> 框选。<b style="color:#f0f0f0">单击</b> 对象将其选中。</div>

</div>
</body></html>
